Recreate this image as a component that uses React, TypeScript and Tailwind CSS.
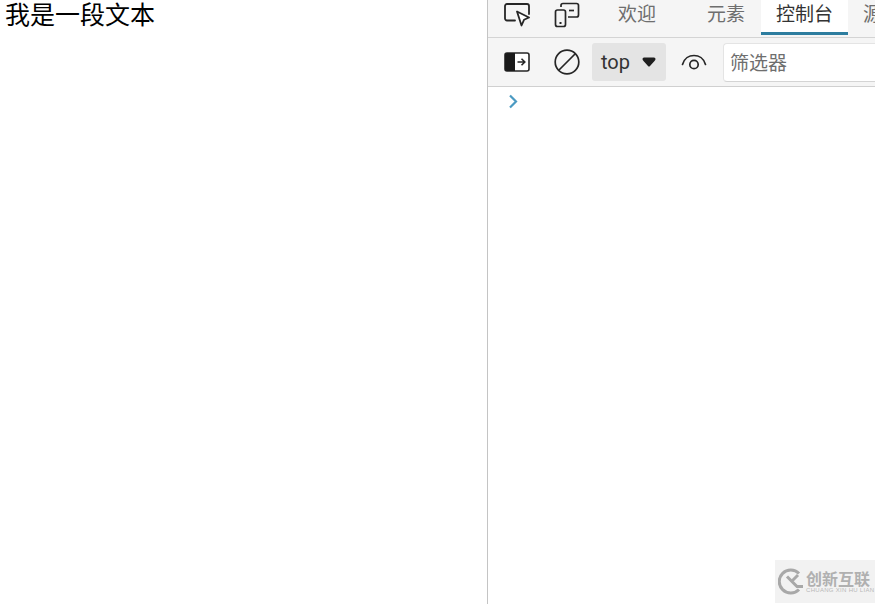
import React from "react";

const cjk = "font-['Noto_Sans_CJK_SC','Noto_Sans',sans-serif]";

const InspectIcon = () => (
  <svg width="26" height="24" viewBox="0 0 26 24" fill="none" stroke="#262626" strokeWidth="1.8">
    <path d="M11 17.500H3A2 2 0 0 1 1 15.500V3A2 2 0 0 1 3 1H23A2 2 0 0 1 25 3V11" strokeLinecap="round" />
    <path d="M13 8.500L25 14.500L20 16.800L17.500 22.500Z" fill="#fff" strokeLinejoin="round" />
  </svg>
);

const DeviceIcon = () => (
  <svg width="26" height="26" viewBox="0 0 26 26" fill="none" stroke="#262626" strokeWidth="1.700">
    <path d="M7 5V3.500A2 2 0 0 1 9 1.500H22.500A2 2 0 0 1 24.500 3.500V13A2 2 0 0 1 22.500 15H14" />
    <rect x="1.500" y="8" width="10" height="16.500" rx="2" />
    <path d="M15 8.500H20" />
    <path d="M5.500 21H7.500" strokeWidth="2" />
  </svg>
);

const SidebarIcon = () => (
  <svg width="26" height="20" viewBox="0 0 26 20" fill="none">
    <rect x="1" y="1" width="24" height="18" rx="2" fill="#fff" stroke="#262626" strokeWidth="1.600" />
    <path d="M1 3A2 2 0 0 1 3 1H11V19H3A2 2 0 0 1 1 17Z" fill="#1a1a1a" />
    <path d="M13.500 10H20.500M17.500 6.800L20.800 10L17.500 13.200" stroke="#262626" strokeWidth="1.600" />
  </svg>
);

const ClearIcon = () => (
  <svg width="26" height="26" viewBox="0 0 26 26" fill="none" stroke="#262626" strokeWidth="1.700">
    <circle cx="13" cy="13" r="11.800" />
    <path d="M5 21L21 5" />
  </svg>
);

const EyeIcon = () => (
  <svg width="26" height="18" viewBox="0 0 26 18" fill="none" stroke="#262626" strokeWidth="1.700">
    <path d="M1.500 11.500C5 -0.500 21 -0.500 24.500 11.500" strokeLinecap="round" />
    <circle cx="13" cy="11.500" r="4.200" />
  </svg>
);

const Tab = ({ label, className }: { label: string; className: string }) => (
  <div className={`h-full shrink-0 text-[19px] leading-[25px] text-[#6e6e6e] ${className}`}>
    {label}
  </div>
);

const App: React.FC = () => {
  return (
    <div className={`relative flex h-[604px] w-[875px] overflow-hidden bg-white ${cjk}`}>
      {/* page side */}
      <div className="w-[487px] shrink-0 pl-[5px] text-[25px] leading-[27px] font-normal text-black">
        我是一段文本
      </div>
      <div className="w-px shrink-0 bg-[#c4c4c4]" />

      {/* devtools side */}
      <div className="min-w-0 flex-1">
        <div className="flex h-[38px] items-start border-b border-[#d4d4d4] bg-[#f5f5f5]">
          <div className="ml-[16px] mt-[3px] shrink-0">
            <InspectIcon />
          </div>
          <div className="ml-[24px] mt-[2px] shrink-0">
            <DeviceIcon />
          </div>
          <Tab label="欢迎" className="ml-[38px]" />
          <Tab label="元素" className="ml-[51px]" />
          <div className="ml-[16px] h-[35px] w-[87px] shrink-0 border-b-[3px] border-[#2d7d9f] bg-white text-center text-[19px] leading-[25px] text-[#333]">
            控制台
          </div>
          <Tab label="源" className="ml-[15px]" />
        </div>

        <div className="flex h-[49px] items-center border-b border-[#d0d0d0] bg-[#f5f5f5]">
          <div className="ml-[16px] shrink-0">
            <SidebarIcon />
          </div>
          <div className="ml-[24px] shrink-0">
            <ClearIcon />
          </div>
          <div className="ml-[12px] flex h-[38px] w-[74px] shrink-0 items-center rounded-[3px] bg-[#e4e4e4] pl-[9px]">
            <span className="font-['Roboto',sans-serif] text-[20px] text-[#333]">top</span>
            <svg className="ml-[12px]" width="14" height="10" viewBox="0 0 14 10">
              <path d="M0.500 2Q0.500 0.500 2 0.500H12Q13.500 0.500 13.500 2Q13.500 3 12.500 4L8 9Q7 10 6 9L1.500 4Q0.500 3 0.500 2Z" fill="#1f1f1f" />
            </svg>
          </div>
          <div className="ml-[15px] shrink-0">
            <EyeIcon />
          </div>
          <div className="ml-[16px] flex h-[39px] flex-1 items-center rounded-l-[4px] border border-r-0 border-[#e4e4e4] border-b-[#d4d4d4] bg-white pl-[6px] text-[19px] text-[#6e6e6e]">
            筛选器
          </div>
        </div>

        <div className="pl-[20px] pt-[7px]">
          <svg width="10" height="15" viewBox="0 0 10 15" fill="none" stroke="#4b9ac2" strokeWidth="2.200">
            <path d="M2 1.500L8 7.500L2 13.500" />
          </svg>
        </div>
      </div>

      {/* watermark over the corner */}
      <div className="absolute bottom-[1px] right-0 flex h-[43px] w-[100px] items-center bg-[#f2f2f2] pl-[3px]">
        <svg width="27" height="27" viewBox="0 0 27 27" fill="none" stroke="#a8a8a8" strokeWidth="3">
          <path d="M21 5.500A11.500 11.500 0 1 0 21 21.500" />
          <path d="M9 8.500L19 18.500L25 18.500M20 7L14.500 12.500" />
        </svg>
        <div className="ml-[1px] flex flex-col items-start">
          <span className="text-[16px] leading-[17px] font-bold text-[#b0b0b0]">创新互联</span>
          <span className="font-['Liberation_Sans',sans-serif] text-[6px] leading-[7px] tracking-[0.3px] whitespace-nowrap text-[#b8b8b8]">
            CHUANG XIN HU LIAN
          </span>
        </div>
      </div>
    </div>
  );
};

export default App;
